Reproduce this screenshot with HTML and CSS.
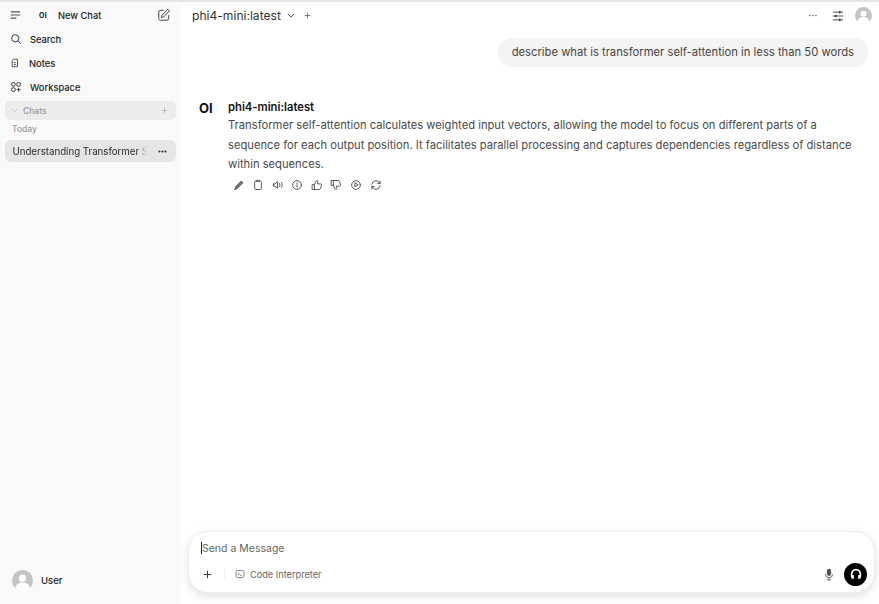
FILE: index.html
```html
<!DOCTYPE html>
<html lang="en">
<head>
<meta charset="utf-8">
<title>Open WebUI</title>
<link rel="stylesheet" href="styles.css">
</head>
<body>
<div class="app">
  <aside class="sidebar">
    <div class="side-top">
      <svg class="ic menu" viewBox="0 0 14 12"><path d="M1 2h12M1 6h12M1 10h7" fill="none" stroke="#555" stroke-width="1.4"/></svg>
      <span class="logo-wrap"><span class="logo-small">OI</span></span>
      <span class="new-chat">New Chat</span>
      <svg class="ic compose" viewBox="0 0 24 24" fill="none" stroke="#444" stroke-width="1.7" stroke-linejoin="round" stroke-linecap="round"><path d="M11 4H6a3 3 0 0 0-3 3v11a3 3 0 0 0 3 3h11a3 3 0 0 0 3-3v-5"/><path d="M19 2.500l2.500 2.500L11 15.500l-3.500 1 1-3.500z"/></svg>
    </div>
    <nav class="nav">
      <div class="nav-item"><svg class="nav-ic" viewBox="0 0 16 16" fill="none" stroke="#333" stroke-width="1.3"><circle cx="7" cy="7" r="4.800"/><path d="M10.500 10.500L14.500 14.500"/></svg><span class="search-label">Search</span></div>
      <div class="nav-item"><svg class="nav-ic notes-ic" viewBox="0 0 16 16" fill="none" stroke="#333" stroke-width="1.3" stroke-linejoin="round"><path d="M5.500 2h6.500v12H3.500V4.500z"/><path d="M6 7.500h3.500M6 10.500h3.500"/></svg><span class="notes-label">Notes</span></div>
      <div class="nav-item"><svg class="nav-ic" viewBox="0 0 16 16" fill="none" stroke="#333" stroke-width="1.300"><circle cx="4.500" cy="4.500" r="2.500"/><rect x="9" y="2" width="5" height="5" rx="2.200"/><rect x="2" y="9" width="5" height="5" rx="2.200"/><path d="M11.500 9v5M9 11.500h5"/></svg><span class="search-label">Workspace</span></div>
    </nav>
    <div class="chats-bar">
      <svg class="chev" viewBox="0 0 10 6"><path d="M1 1l4 4 4-4" fill="none" stroke="#b5b5b5" stroke-width="1"/></svg>
      <span class="chats-label">Chats</span>
      <svg class="plus-small" viewBox="0 0 10 10"><path d="M5 1v8M1 5h8" stroke="#aaa" stroke-width="1"/></svg>
    </div>
    <div class="today">Today</div>
    <div class="chat-row">
      <span class="chat-title">Understanding Transformer Self-Attention</span>
      <svg class="dots-dark" viewBox="0 0 12 4"><circle cx="2" cy="2" r="1.400"/><circle cx="6" cy="2" r="1.400"/><circle cx="10" cy="2" r="1.400"/></svg>
    </div>
    <div class="side-user">
      <svg class="avatar" viewBox="0 0 32 32"><circle cx="16" cy="16" r="16" fill="#c4c4c4"/><circle cx="16" cy="12.500" r="5.500" fill="#fff"/><path d="M5 28c1-7 6-9 11-9s10 2 11 9a16 16 0 0 1-22 0z" fill="#fff"/></svg>
      <span class="user-name">User</span>
    </div>
  </aside>

  <main class="main">
    <header class="topbar">
      <span class="model-name">phi4-mini:latest</span>
      <svg class="chev-model" viewBox="0 0 10 6"><path d="M1 1l4 4 4-4" fill="none" stroke="#444" stroke-width="1.200"/></svg>
      <svg class="plus-model" viewBox="0 0 10 10"><path d="M5 1v8M1 5h8" stroke="#666" stroke-width="1.200"/></svg>
      <span class="spacer"></span>
      <svg class="dots-top" viewBox="0 0 12 4"><circle cx="2" cy="2" r=".9"/><circle cx="6" cy="2" r=".9"/><circle cx="10" cy="2" r=".9"/></svg>
      <svg class="sliders" viewBox="0 0 14 14" fill="none" stroke="#444" stroke-width="1.100"><path d="M1 2.500h12M1 7h12M1 11.500h12"/><path d="M9 1v3M4.500 5.500v3M9 10v3" stroke-width="1.800"/></svg>
      <svg class="avatar-top" viewBox="0 0 32 32"><circle cx="16" cy="16" r="16" fill="#c4c4c4"/><circle cx="16" cy="12.500" r="5.500" fill="#fff"/><path d="M5 28c1-7 6-9 11-9s10 2 11 9a16 16 0 0 1-22 0z" fill="#fff"/></svg>
    </header>

    <section class="conversation">
      <div class="user-msg-row"><div class="user-msg">describe what is transformer self-attention in less than 50 words</div></div>
      <div class="reply">
        <div class="reply-logo">OI</div>
        <div class="reply-body">
          <div class="reply-name">phi4-mini:latest</div>
          <p class="reply-text">Transformer self-attention calculates weighted input vectors, allowing the model to focus on different parts of a sequence for each output position. It facilitates parallel processing and captures dependencies regardless of distance within sequences.</p>
          <div class="actions">
            <svg viewBox="0 0 16 16"><path d="M3 13l.8-3L11 2.800l2.200 2.200L6 12.200z" fill="#777"/><path d="M2 14l1.500-.6"/></svg>
            <svg viewBox="0 0 16 16"><rect x="3.500" y="3" width="9" height="11" rx="1.500"/><path d="M6 3V1.800h4V3"/></svg>
            <svg viewBox="0 0 16 16"><path d="M2 6.500v3h2L7.500 12.500v-9L4 6.500z"/><path d="M10 6c.8 1.200.8 2.800 0 4M12.500 4.500c1.500 2 1.500 5 0 7"/></svg>
            <svg viewBox="0 0 16 16"><circle cx="8" cy="8" r="5.800"/><path d="M8 7.500V11M8 5v1"/></svg>
            <svg viewBox="0 0 16 16"><path d="M2 7.500h2.500V14H2zM4.500 7.500L7.500 2c1.500 0 2 1 1.500 2.500L8.500 6.500h4.500c1 0 1.300.7 1 1.500l-1.500 5c-.2.7-.7 1-1.500 1H4.500"/></svg>
            <svg viewBox="0 0 16 16"><path d="M2 2h2.500v6.500H2zM4.500 8.500L7.500 14c1.500 0 2-1 1.500-2.500L8.500 9.500h4.500c1 0 1.300-.7 1-1.500l-1.500-5c-.2-.7-.7-1-1.500-1H4.500"/></svg>
            <svg viewBox="0 0 16 16"><circle cx="8" cy="8" r="5.800"/><path d="M6.500 5.500v5l4-2.500z"/></svg>
            <svg viewBox="0 0 16 16"><path d="M2.500 7a5.500 5.500 0 0 1 9.800-2.500L13.500 6M13.500 9a5.500 5.500 0 0 1-9.800 2.500L2.500 10"/><path d="M13.500 2.800V6h-3.200M2.500 13.200V10h3.200"/></svg>
          </div>
        </div>
      </div>
    </section>

    <div class="composer-wrap">
      <div class="composer">
        <div class="placeholder"><span class="caret"></span>Send a Message</div>
        <div class="composer-tools">
          <svg class="plus-input" viewBox="0 0 12 12"><path d="M6 1v10M1 6h10" stroke="#333" stroke-width="1.300"/></svg>
          <span class="divider"></span>
          <svg class="term-ic" viewBox="0 0 14 14" fill="none" stroke="#555" stroke-width="1"><rect x="1.500" y="2" width="11" height="10" rx="2"/><path d="M4 5.500L6 7 4 8.500M7 9h2.500"/></svg>
          <span class="code-label">Code Interpreter</span>
          <span class="spacer"></span>
          <svg class="mic" viewBox="0 0 14 18"><rect x="4" y="1" width="6" height="10" rx="3" fill="#555"/><path d="M2 8.500a5 5 0 0 0 10 0M7 13.500V16M4 16.500h6" fill="none" stroke="#555" stroke-width="1.200"/></svg>
          <span class="voice"><svg viewBox="0 0 16 16" fill="none" stroke="#fff" stroke-width="1.900"><path d="M3 11V8a5 5 0 0 1 10 0v3"/><rect x="2.600" y="9" width="3" height="4.500" rx="1" fill="#fff" stroke="none"/><rect x="10.400" y="9" width="3" height="4.500" rx="1" fill="#fff" stroke="none"/></svg></span>
        </div>
      </div>
    </div>
  </main>
</div>
</body>
</html>
```

FILE: styles.css
```css
* { box-sizing: border-box; }
html, body { margin: 0; height: 100%; }
body { font-family: Inter, "Liberation Sans", sans-serif; background: #fff; color: #222; overflow: hidden; }
.app { display: flex; height: 604px; border-top: 2px solid #e6e6e6; }
svg { display: block; flex: none; }

.sidebar { width: 181px; flex: none; background: #f9f9f9; display: flex; flex-direction: column; padding: 0 5px; }
.side-top { display: flex; align-items: center; height: 26px; padding-left: 5px; }
.menu { width: 11px; height: 10px; }
.logo-wrap { width: 14px; height: 14px; border-radius: 50%; background: #fff; margin-left: 15px; display: flex; align-items: center; justify-content: center; }
.logo-small { font-size: 7px; font-weight: 700; color: #111; letter-spacing: .2px; }
.new-chat { font-size: 9.300px; font-weight: 500; margin-left: 8px; color: #222; }
.compose { width: 14px; height: 14px; margin-left: auto; margin-right: 5px; }

.nav { display: flex; flex-direction: column; margin-top: -1px; }
.nav-item { display: flex; align-items: center; height: 24px; padding-left: 5px; font-size: 9.300px; font-weight: 500; color: #222; }
.nav-ic { width: 12px; height: 12px; }
.notes-ic { width: 10px; height: 12px; }
.search-label { margin-left: 8px; }
.notes-label { margin-left: 9px; }

.chats-bar { display: flex; align-items: center; height: 19px; margin-top: 2px; background: #ececec; border-radius: 5px; padding: 0 6px; }
.chev { width: 7px; height: 5px; }
.chats-label { font-size: 8.500px; font-weight: 500; color: #9a9a9a; margin-left: 5px; }
.plus-small { width: 7px; height: 7px; margin-left: auto; margin-right: 2px; }
.today { font-size: 8.500px; font-weight: 500; color: #9a9a9a; padding-left: 7px; height: 20px; line-height: 19px; }
.chat-row { display: flex; align-items: center; height: 22px; background: #e5e5e5; border-radius: 6px; padding: 0 9px 0 7.500px; }
.chat-title { font-size: 9.700px; color: #2a2a2a; white-space: nowrap; overflow: hidden; width: 134px; -webkit-mask-image: linear-gradient(to right, #000 92%, transparent); mask-image: linear-gradient(to right, #000 92%, transparent); }
.dots-dark { width: 9px; height: 3px; margin-left: auto; fill: #333; }
.side-user { display: flex; align-items: center; margin-top: auto; margin-bottom: 13px; padding-left: 7px; }
.avatar { width: 21px; height: 21px; }
.user-name { font-size: 9.500px; font-weight: 500; margin-left: 8px; color: #222; }

.main { flex: 1; min-width: 0; display: flex; flex-direction: column; background: #fff; }
.topbar { display: flex; align-items: center; height: 27px; padding: 0 7px 0 11px; }
.model-name { font-size: 12.100px; color: #333; }
.chev-model { width: 8px; height: 5px; margin-left: 6px; }
.plus-model { width: 7px; height: 7px; margin-left: 9px; }
.spacer { flex: 1; }
.dots-top { width: 10px; height: 3px; fill: #444; }
.sliders { width: 12px; height: 12px; margin-left: 14px; }
.avatar-top { width: 17px; height: 17px; margin-left: 11px; }

.conversation { flex: 1; display: flex; flex-direction: column; min-height: 0; }
.user-msg-row { display: flex; justify-content: flex-end; padding: 9px 11px 0 0; }
.user-msg { background: #f4f4f4; border-radius: 14px; padding: 0 14px; height: 29px; line-height: 29px; font-size: 11.240px; color: #444; }
.reply { display: flex; padding: 31px 19px 0 18px; }
.reply-logo { width: 29px; flex: none; font-size: 13px; font-weight: 700; color: #111; line-height: 16px; padding-top: 2px; }
.reply-body { flex: 1; min-width: 0; }
.reply-name { font-size: 11.240px; font-weight: 600; color: #111; line-height: 16px; padding-top: 1px; }
.reply-text { margin: 0; font-size: 11.210px; line-height: 19.500px; color: #4a4a4a; padding-top: 1px; }
.actions { display: flex; gap: 7.600px; margin: 4px 0 0 4.500px; }
.actions svg { width: 12px; height: 12px; fill: none; stroke: #555; stroke-width: 1.300; stroke-linejoin: round; stroke-linecap: round; }

.composer-wrap { padding: 0 4px 11px 7px; }
.composer { height: 62px; background: #fff; border: 1px solid #eee; border-radius: 20px; box-shadow: 0 3px 10px rgba(0,0,0,.12); padding: 0 7px 0 12px; display: flex; flex-direction: column; }
.placeholder { font-size: 10.500px; color: #666; height: 31px; display: flex; align-items: center; padding-top: 1px; }
.caret { width: 1px; height: 12px; background: #222; }
.composer-tools { display: flex; align-items: center; height: 22px; }
.plus-input { width: 9px; height: 9px; margin-left: 2px; }
.divider { width: 1px; height: 12px; background: #f3f3f3; margin-left: 12px; }
.term-ic { width: 10px; height: 10px; margin-left: 10px; }
.code-label { font-size: 9.200px; color: #666; margin-left: 5px; }
.mic { width: 10px; height: 13px; margin-right: 10px; }
.voice { width: 23px; height: 23px; border-radius: 50%; background: #000; display: flex; align-items: center; justify-content: center; }
.voice svg { width: 14px; height: 14px; }
```
